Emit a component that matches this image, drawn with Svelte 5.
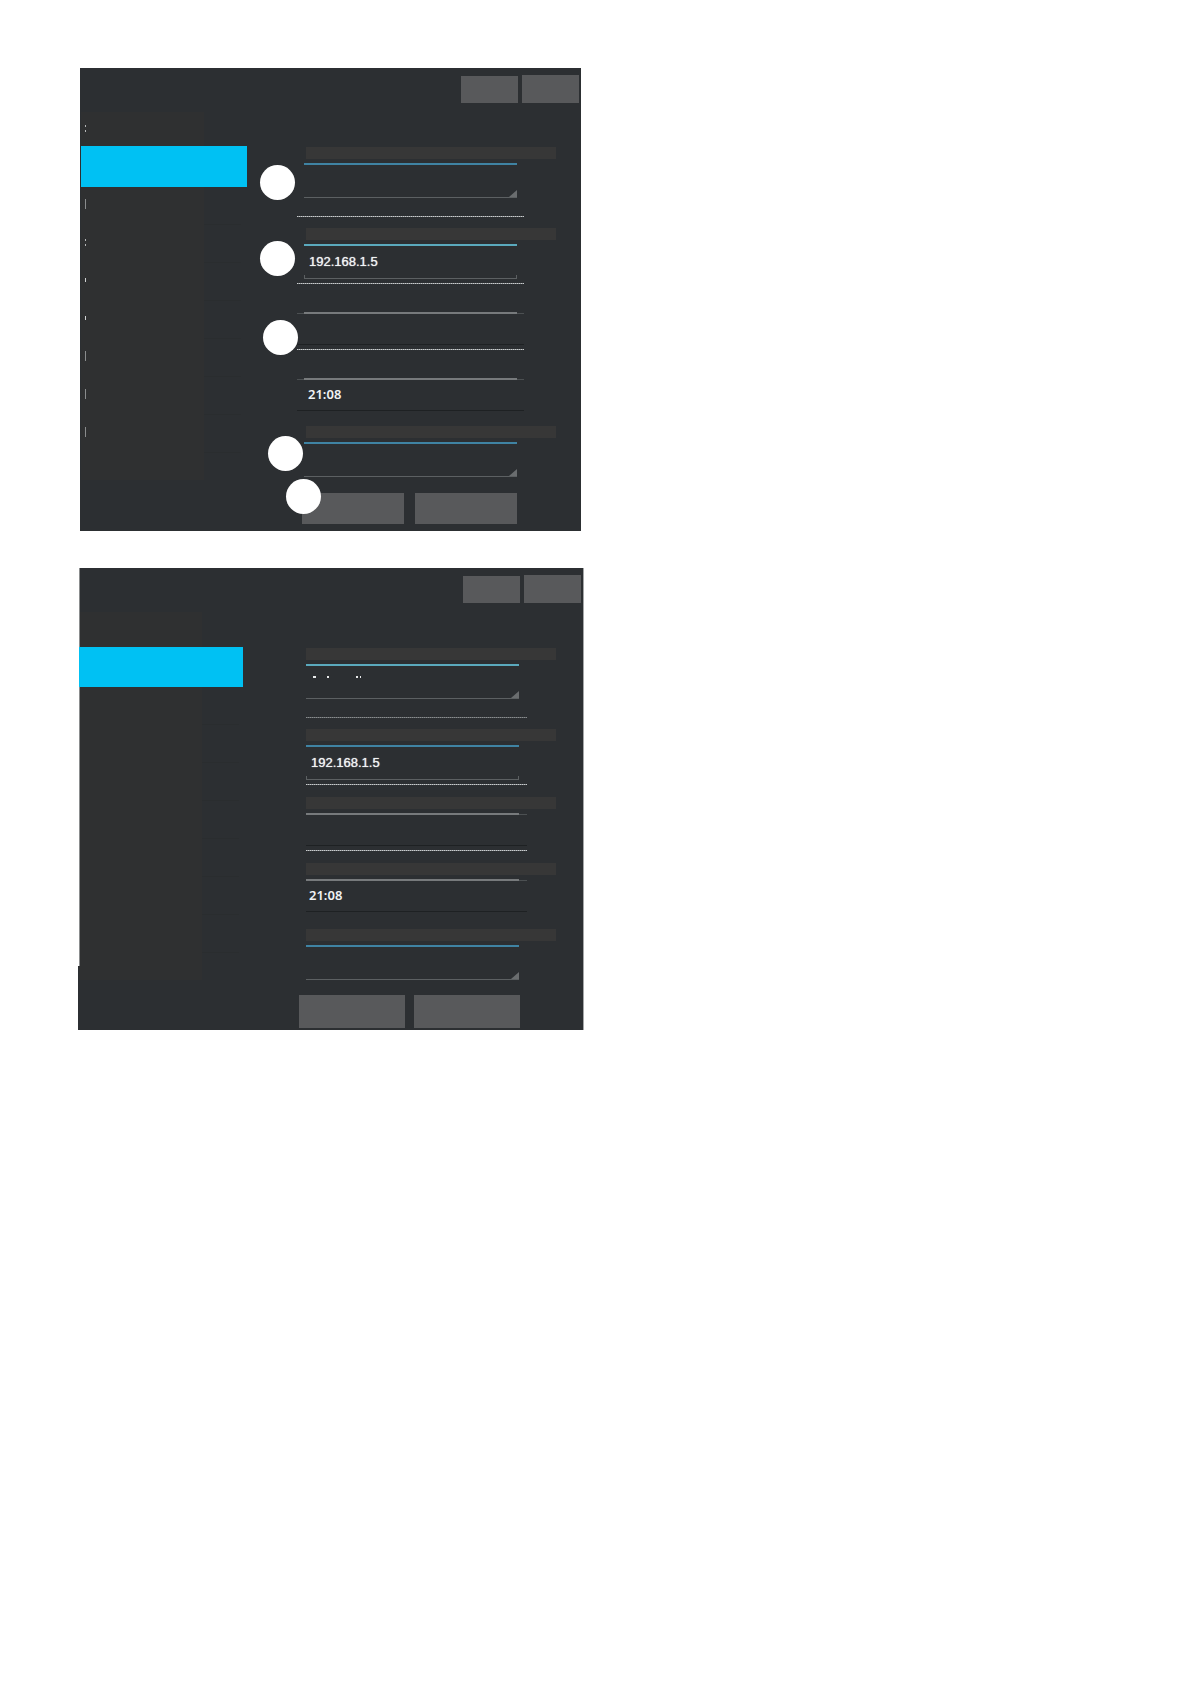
<script>
  const links = ['Network', 'Security', 'Camera', 'Control', 'Display', 'Language', 'License'];

  const fields = [
    { id: 'mode', label: 'Mode', kind: 'select', divider: true },
    { id: 'address', label: 'IP address', kind: 'text', value: '192.168.1.5', divider: true },
    { id: 'date', label: 'Date', kind: 'plain', value: '', divider: true },
    { id: 'time', label: 'Time', kind: 'plain', value: '21:08', divider: false },
    { id: 'zone', label: 'Time zone', kind: 'select', divider: false }
  ];

  const screens = [
    {
      name: 'first',
      edges: ['dots', 'long', 'dots', 'short', 'short', 'long', 'long', 'long'],
      titled: ['mode', 'address', 'zone'],
      markers: [
        { x: 180, y: 97 },
        { x: 180, y: 173 },
        { x: 183, y: 252 },
        { x: 188, y: 368 },
        { x: 206, y: 411 }
      ]
    },
    {
      name: 'second',
      edges: [],
      titled: ['mode', 'address', 'date', 'time', 'zone'],
      markers: []
    }
  ];
</script>

<main>
  {#each screens as screen}
  <section class="screen {screen.name}">
    <header>
      <button type="button" aria-label="Back"></button>
      <button type="button" class="tall" aria-label="Home"></button>
    </header>

    <div class="body">
      <nav aria-label="Settings">
        <div class="heading"><i class="edge {screen.edges[0]}"></i></div>
        <a class="active" href="#setup" aria-label="Setup"></a>
        {#each links as link, i}
        <a href="#{link.toLowerCase()}" aria-label={link}>
          <i class="edge {screen.edges[i + 1]}"></i>
        </a>
        {/each}
      </nav>

      <form>
        {#each fields as field}
        <label
          class="title"
          class:shown={screen.titled.includes(field.id)}
          for="{screen.name}-{field.id}"
          aria-label={field.label}
        ></label>
        <div class="field {field.kind} {field.id}">
          {#if field.kind === 'select'}
          <select id="{screen.name}-{field.id}" aria-label={field.label}>
            <option value=""></option>
          </select>
          {#if screen.name === 'second' && field.id === 'mode'}
          <svg class="specks" width="52" height="4" viewBox="0 0 52 4" aria-hidden="true">
            <path d="M1 1h3M15 1h2M44 1h2M48 1h1" />
          </svg>
          {/if}
          {:else}
          <input
            id="{screen.name}-{field.id}"
            type="text"
            value={field.value}
            aria-label={field.label}
          />
          {/if}
        </div>
        {#if field.divider}
        <hr />
        {/if}
        {/each}
        <div class="actions">
          <button type="button" aria-label="Save"></button>
          <button type="button" aria-label="Cancel"></button>
        </div>
      </form>
    </div>

    {#each screen.markers as marker}
    <span class="marker" style="left: {marker.x}px; top: {marker.y}px"></span>
    {/each}
  </section>
  {/each}
</main>

<style>
  :global(body) {
    background: #fff;
    margin: 0;
  }
  main {
    display: flex;
    flex-direction: column;
    font-family: 'Liberation Sans', Arial, sans-serif;
    gap: 37px;
    padding: 68px 78px;
  }
  .screen {
    background: #2c2f32;
    box-sizing: border-box;
    max-width: 501px;
    position: relative;
    width: 100%;
  }
  .first {
    margin-left: 2px;
    padding-bottom: 7px;
  }
  .second {
    border-right: 1px solid #a5a7a8;
    max-width: 506px;
    padding-bottom: 2px;
  }
  /* thin light strip down the left side, ending above the footer */
  .second::before {
    background: #fff;
    border-right: 1px solid #8b8d8e;
    bottom: 64px;
    content: '';
    left: 0;
    position: absolute;
    top: 0;
    width: 1px;
  }
  button {
    background: #58595b;
    border: 0;
    padding: 0;
  }
  header {
    align-items: flex-end;
    box-sizing: border-box;
    display: flex;
    gap: 4px;
    height: 35px;
    justify-content: flex-end;
    padding-right: 2px;
  }
  header button {
    height: 27px;
    width: 57px;
  }
  header .tall {
    height: 28px;
  }
  .body {
    align-items: flex-start;
    display: flex;
  }

  nav {
    background: linear-gradient(#2f3031, #2f3031) 0 9px / 123px 368px no-repeat;
    margin-left: 1px;
    padding-bottom: 28px;
    width: 166px;
  }
  .heading {
    align-items: center;
    box-sizing: border-box;
    display: flex;
    height: 43px;
    padding: 8px 0 0 4px;
  }
  .second .heading {
    height: 44px;
  }
  nav a {
    align-items: center;
    background: linear-gradient(#2a2d2f, #2a2d2f) 123px 100% / 37px 1px no-repeat;
    box-sizing: border-box;
    display: flex;
    height: 38px;
    padding: 0 0 4px 4px;
  }
  nav .active {
    background: #00c1f3;
    height: 41px;
  }
  .second nav .active {
    height: 40px;
    position: relative;
    width: 164px;
  }
  .edge {
    width: 1px;
  }
  .long {
    background: #8a8c8d;
    height: 10px;
  }
  .short {
    background: #d0d2d3;
    height: 4px;
  }
  .dots {
    background: linear-gradient(#b5b7b8 2px, transparent 2px 5px, #b5b7b8 5px);
    height: 7px;
  }

  form {
    flex: 1;
    margin-left: 50px;
    padding-top: 44px;
  }
  .second form {
    margin-left: 54px;
    padding-top: 45px;
  }
  .title {
    display: block;
    height: 12px;
    margin: 0 0 4px 9px;
    width: 250px;
  }
  .second .title {
    margin-left: 7px;
  }
  .title.shown {
    background: #373737;
  }
  .field {
    box-sizing: border-box;
    height: 35px;
    margin-left: 7px;
    position: relative;
    width: 213px;
  }
  .select,
  .text {
    border-bottom: 1px solid #5c6062;
    border-top: 2px solid #3f83a3;
  }
  .first .text,
  .second .mode {
    border-top-color: #5aa9bd;
  }
  /* short upright ends of the bottom rule */
  .text {
    background:
      linear-gradient(#5c6062, #5c6062) 0 100% / 1px 3px no-repeat,
      linear-gradient(#5c6062, #5c6062) 100% 100% / 1px 3px no-repeat;
  }
  .select::after {
    background: #6a6d6f;
    bottom: 0;
    clip-path: polygon(100% 0, 100% 100%, 0 100%);
    content: '';
    height: 7px;
    pointer-events: none;
    position: absolute;
    right: 0;
    width: 8px;
  }
  .plain {
    background:
      linear-gradient(#777a7c, #777a7c) 7px 0 / 213px 2px no-repeat,
      linear-gradient(#4c5052, #4c5052) 0 1px / 100% 1px no-repeat;
    border-bottom: 1px solid #1e2123;
    height: 33px;
    margin-left: 0;
    width: 227px;
  }
  .second .plain {
    background-position: 0 0, 0 1px;
    margin-left: 7px;
    width: 221px;
  }
  .time + .title {
    margin-top: 15px;
  }
  .second .time + .title {
    margin-top: 17px;
  }
  select,
  input {
    appearance: none;
    background: transparent;
    border: 0;
    box-sizing: border-box;
    color: #f1f3f4;
    display: block;
    font: 13px 'Liberation Sans', Arial, sans-serif;
    height: 100%;
    outline: 0;
    padding: 0 5px 1px;
    text-shadow: 0 0 1px #f1f3f4;
    width: 100%;
  }
  .plain input {
    font-family: 'Noto Sans', sans-serif;
    font-weight: 600;
    padding-left: 11px;
    text-shadow: none;
  }
  .second .plain input {
    padding-left: 3px;
  }
  .specks {
    left: 6px;
    position: absolute;
    top: 10px;
  }
  .specks path {
    stroke: #e8eaeb;
    stroke-width: 2;
  }
  hr {
    background: repeating-linear-gradient(90deg, #c9cccd 0 1px, #85898b 1px 2px);
    border: 0;
    height: 1px;
    margin: 4px 0 12px;
    width: 227px;
  }
  .second hr {
    margin-left: 7px;
    width: 221px;
  }
  .mode + hr {
    margin-bottom: 11px;
    margin-top: 18px;
  }
  .second .mode + hr {
    opacity: 0.6;
  }
  .actions {
    display: flex;
    gap: 11px;
    margin: 16px 0 0 5px;
  }
  .actions button {
    height: 31px;
    width: 102px;
  }
  .second .actions {
    gap: 9px;
    margin-left: 0;
    margin-top: 15px;
  }
  .second .actions button {
    height: 33px;
    width: 106px;
  }
  .marker {
    background: #fff;
    border-radius: 50%;
    height: 35px;
    position: absolute;
    width: 35px;
  }
</style>
